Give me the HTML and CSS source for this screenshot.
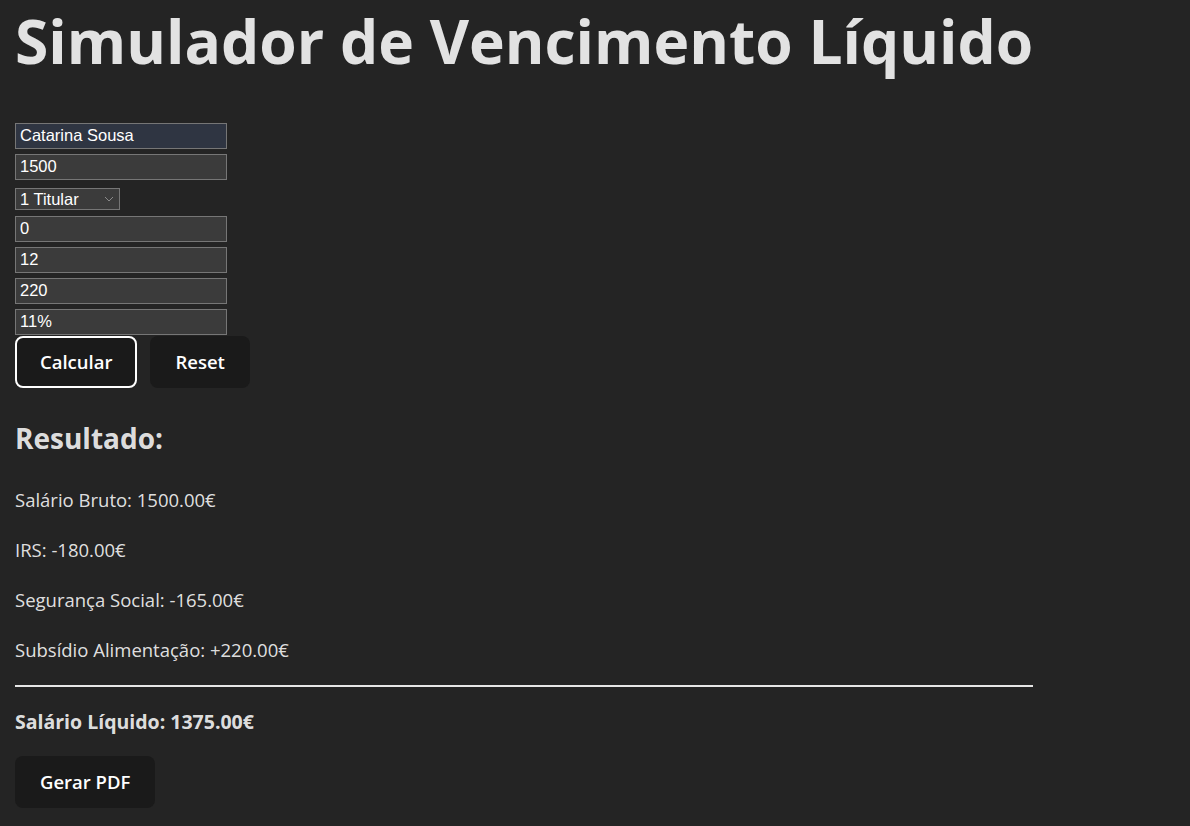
FILE: index.html
```html
<!DOCTYPE html>
<html lang="pt">
<head>
<meta charset="utf-8">
<title>Simulador de Vencimento Líquido</title>
<link rel="stylesheet" href="styles.css">
</head>
<body>
<div class="app">
  <h1 class="title">Simulador de Vencimento Líquido</h1>
  <form class="form">
    <input class="field field-name" type="text" value="Catarina Sousa">
    <input class="field" type="text" value="1500">
    <div class="select-wrap">
      <select class="select">
        <option>1 Titular</option>
        <option>2 Titulares</option>
      </select>
      <svg class="chev" width="10" height="6" viewBox="0 0 10 6"><path d="M1 1l4 4 4-4" fill="none" stroke="#8a8a8a" stroke-width="1"/></svg>
    </div>
    <input class="field" type="text" value="0">
    <input class="field" type="text" value="12">
    <input class="field" type="text" value="220">
    <input class="field" type="text" value="11%">
    <div class="actions">
      <button type="button" class="btn btn-focus">Calcular</button>
      <button type="button" class="btn">Reset</button>
    </div>
  </form>
  <section class="result">
    <h2 class="result-title">Resultado:</h2>
    <p class="line">Salário Bruto: 1500.00€</p>
    <p class="line">IRS: -180.00€</p>
    <p class="line">Segurança Social: -165.00€</p>
    <p class="line">Subsídio Alimentação: +220.00€</p>
    <hr class="rule">
    <p class="net">Salário Líquido: 1375.00€</p>
    <button type="button" class="btn">Gerar PDF</button>
  </section>
</div>
</body>
</html>
```
FILE: styles.css
```css
html, body {
  margin: 0;
  padding: 0;
  background: #242424;
}
body {
  color: rgba(255, 255, 255, 0.87);
  font-family: "Open Sans", "Noto Sans", sans-serif;
  font-size: 18.5px;
}
.app {
  display: inline-block;
  padding: 0 15px;
}
.title {
  font-size: 60.5px;
  font-weight: 700;
  line-height: 1.1;
  margin: 8px 0 48px;
  letter-spacing: 0;
}
.form {
  display: flex;
  flex-direction: column;
  align-items: flex-start;
  gap: 5px;
}
.field {
  box-sizing: border-box;
  width: 212px;
  height: 26px;
  padding: 1px 4px;
  font-family: "Liberation Sans", Arial, sans-serif;
  font-size: 16.5px;
  color: #fff;
  background: #3b3b3b;
  border: 1px solid #767676;
  border-radius: 0;
}
.field-name {
  background: #2f3542;
}
.select-wrap {
  position: relative;
  margin: 3px 0 1px;
}
.select {
  display: block;
  box-sizing: border-box;
  width: 105px;
  height: 22px;
  padding: 0 4px;
  font-family: "Liberation Sans", Arial, sans-serif;
  font-size: 16.5px;
  color: #fff;
  background: #3b3b3b;
  border: 1px solid #767676;
  border-radius: 0;
  appearance: none;
  -webkit-appearance: none;
}
.chev {
  position: absolute;
  right: 6px;
  top: 8px;
  pointer-events: none;
}
.actions {
  display: flex;
  gap: 13px;
  margin-top: -4px;
}
.btn {
  box-sizing: border-box;
  height: 52px;
  padding: 0 23px;
  font-family: "Open Sans", "Noto Sans", sans-serif;
  font-size: 18.5px;
  font-weight: 600;
  color: #fff;
  background: #1a1a1a;
  border: 2px solid transparent;
  border-radius: 8px;
}
.btn-focus {
  border-color: #ffffff;
}
.result-title {
  font-size: 28px;
  font-weight: 700;
  margin: 32px 0 31px;
  line-height: 1.3;
}
.line {
  margin: 0 0 24px;
  line-height: 26px;
}
.rule {
  border: 0;
  height: 2px;
  background: #e6e6e6;
  margin: -2px 0 22px;
}
.net {
  font-size: 19.5px;
  font-weight: 700;
  margin: 0 0 21px;
  line-height: 26px;
}
```
